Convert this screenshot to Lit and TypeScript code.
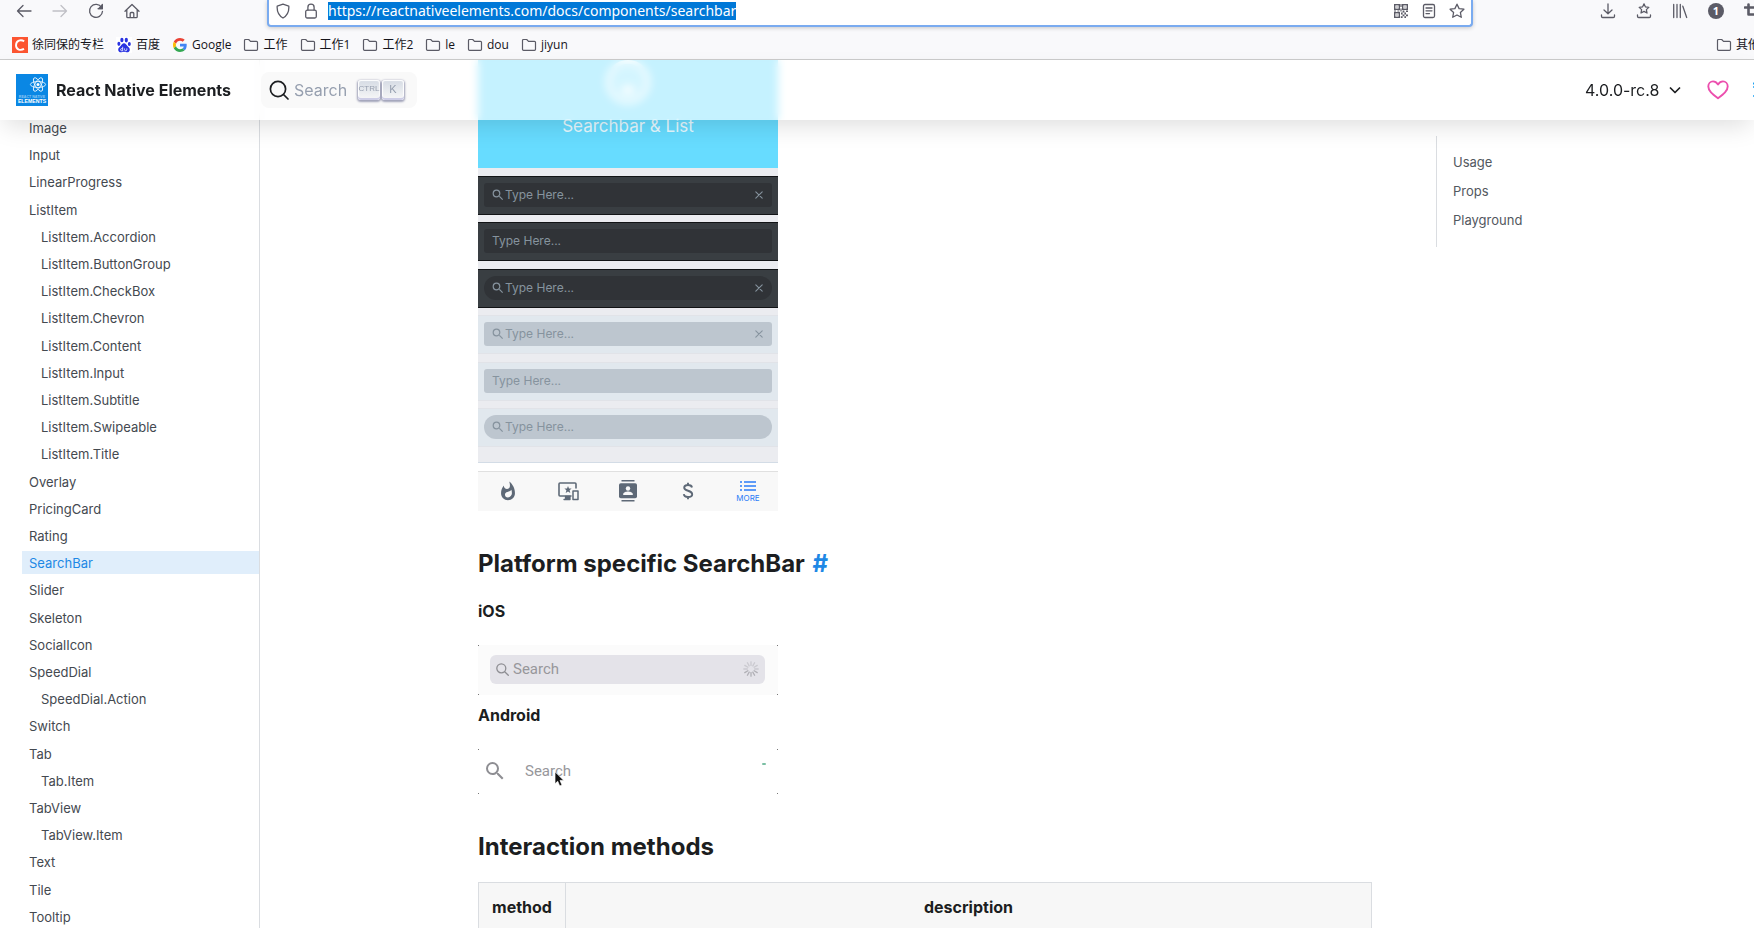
import { LitElement, html, css, svg, TemplateResult } from "lit";
import { customElement } from "lit/decorators.js";
import { classMap } from "lit/directives/class-map.js";

const icon = (w: number, h: number, body: TemplateResult | TemplateResult[], box = `0 0 ${w} ${h}`) =>
  html`<svg width=${w} height=${h} viewBox=${box} fill="none" stroke="currentColor" stroke-width="1.3"
    stroke-linecap="round" stroke-linejoin="round" aria-hidden="true">${body}</svg>`;

const folder = icon(16, 14, svg`<path d="M1.5 2.5a1 1 0 0 1 1-1h3.2l1.8 1.8h6a1 1 0 0 1 1 1v7a1 1 0 0 1-1 1h-11a1 1 0 0 1-1-1z" stroke-width="1.2"/>`);
const star = "M8 1.2l2.1 4.4 4.8.6-3.5 3.3.9 4.8L8 12l-4.3 2.3.9-4.8L1.1 6.2l4.8-.6z";
const magnifier = svg`<path stroke="none" fill="currentColor" d="M15.5 14h-.79l-.28-.27A6.47 6.47 0 0 0 16 9.5 6.5 6.5 0 1 0 9.5 16c1.61 0 3.09-.59 4.23-1.57l.27.28v.79l5 4.99L20.49 19l-4.99-5zm-6 0C7.01 14 5 11.99 5 9.5S7.01 5 9.5 5 14 7.01 14 9.5 11.99 14 9.5 14z"/>`;
const cross = icon(8, 8, svg`<path d="M.8.8l6.4 6.4M7.2.8L.8 7.2" stroke-width="1.1"/>`);

const qr = icon(14, 14, svg`<g stroke-width="1.4" stroke-linejoin="miter"><rect x=".7" y=".7" width="4.6" height="4.6"/><rect x="8.7" y=".7" width="4.6" height="4.6"/><rect x=".7" y="8.7" width="4.6" height="4.6"/></g>
  <g fill="currentColor" stroke="none"><path d="M2.4 2.4h1.2v1.2H2.4zM10.4 2.4h1.2v1.2h-1.2zM2.4 10.4h1.2v1.2H2.4zM0 6.4h2v1.2H0zM3.4 6.4h2v1.2h-2zM6.4 0h1.2v3H6.4zM6.4 4.4h1.2v3H6.4zM8.6 6.6h1.8v1.8H8.6zM12 6.6h2v1.4h-2zM7 8.6h1.6v1.8H7zM10.4 8.6H12v1.8h-1.6zM8.6 10.4h1.8v1.8H8.6zM12 10.4h2v1.8h-2zM6.8 12.2h1.8V14H6.8zM10.4 12.2H12V14h-1.6z"/></g>`);

const reactLogo = html`<svg class="logo" width="32" height="32" viewBox="0 0 32 32" aria-hidden="true">
  <rect width="32" height="32" fill="#0a87e4"/>
  <g fill="none" stroke="#fff" stroke-width=".8"><ellipse cx="22" cy="10.5" rx="7.6" ry="3"/><ellipse cx="22" cy="10.5" rx="7.6" ry="3" transform="rotate(60 22 10.5)"/><ellipse cx="22" cy="10.5" rx="7.6" ry="3" transform="rotate(120 22 10.5)"/></g>
  <circle cx="22" cy="10.5" r="1.5" fill="#fff"/>
  <text x="16" y="23.5" text-anchor="middle" font-family="Liberation Sans" font-size="3.6" fill="#8cc6f3">REACT NATIVE</text>
  <text x="16" y="28.5" text-anchor="middle" font-family="Liberation Sans" font-size="5.2" fill="#fff">ELEMENTS</text>
</svg>`;

const baidu = html`<svg width="16" height="16" viewBox="0 0 16 16" aria-hidden="true"><rect width="16" height="16" fill="#fff"/>
  <g fill="#2932e1"><ellipse cx="5.9" cy="3" rx="1.6" ry="2.3"/><ellipse cx="10.3" cy="3.1" rx="1.6" ry="2.3"/><ellipse cx="2.9" cy="6.8" rx="1.5" ry="2.1"/><ellipse cx="13.3" cy="7" rx="1.5" ry="2.1"/>
  <path d="M8 6.3c1.6 0 2.4 1.5 3.4 2.6 1.3 1.2 2.6 2.2 2.4 4-.2 1.7-1.6 2.5-3.1 2.3-1-.2-1.8-.4-2.7-.4s-1.7.3-2.7.4c-1.5.2-2.9-.6-3.1-2.3-.2-1.8 1.200-2.800 2.400-4C5.600 7.800 6.400 6.300 8 6.300z"/></g>
  <path d="M6.700 9.800v4M6.700 11.600h-1a1 1 0 0 0 0 2.200h1M8.600 11.400v1.500c0 1.200 2.200 1.200 2.200 0v-1.500" fill="none" stroke="#fff" stroke-width=".8"/></svg>`;

const google = html`<svg width="16" height="14" viewBox="-3 0 54 48" aria-hidden="true">
  <path fill="#ea4335" d="M24 9.500c3.540 0 6.710 1.220 9.210 3.600l6.850-6.850C35.900 2.380 30.470 0 24 0 14.620 0 6.510 5.380 2.560 13.220l7.980 6.190C12.430 13.720 17.740 9.500 24 9.500z"/>
  <path fill="#4285f4" d="M46.980 24.550c0-1.570-.15-3.090-.38-4.550H24v9.020h12.940c-.58 2.960-2.260 5.480-4.780 7.180l7.730 6c4.510-4.180 7.090-10.360 7.090-17.650z"/>
  <path fill="#fbbc05" d="M10.530 28.590A14.500 14.500 0 0 1 9.770 24c0-1.600.27-3.140.76-4.590l-7.980-6.190A23.900 23.900 0 0 0 0 24c0 3.880.92 7.540 2.560 10.780z"/>
  <path fill="#34a853" d="M24 48c6.480 0 11.930-2.130 15.890-5.810l-7.730-6c-2.150 1.450-4.920 2.300-8.160 2.300-6.260 0-11.570-4.220-13.470-9.910l-7.980 6.190C6.510 42.620 14.620 48 24 48z"/></svg>`;

const csdn = html`<svg width="16" height="16" viewBox="0 0 16 16" aria-hidden="true"><rect width="16" height="16" fill="#fc5531"/>
  <path d="M12.200 4.200C9 2.300 4 3 4 8.300c0 4.700 4.700 5.400 8 3.600" fill="none" stroke="#fff" stroke-width="1.900"/></svg>`;

const browserStyles = css`
  :host { display: block; color: #15141a; background: #f9f9fb; border-bottom: 1px solid #ccc; overflow: hidden; font-family: "Open Sans", "Noto Sans CJK SC", sans-serif; }
  svg { display: block; flex: none; }
  button { border: 0; padding: 0; background: none; color: inherit; font: inherit; }
  .toolbar { display: grid; grid-template-columns: 267px minmax(0, 1fr) 281px; height: 30px; align-items: start; color: #5b5b66; }
  .group { display: flex; padding-left: 6px; }
  .tool { width: 36px; height: 22px; flex: none; display: grid; place-items: center; }
  .tool.dim { color: #c0c0c6; }
  .extras { padding-left: 117px; overflow: hidden; }
  .badge { width: 16px; height: 16px; border-radius: 50%; background: #5b5b66; color: #fff; font-size: 11px; font-weight: 700; line-height: 16px; text-align: center; }
  .address { display: flex; align-items: center; height: 27px; box-sizing: border-box; padding-bottom: 3px; background: #fff; border: 2px solid #7aabf0; border-top: 0; border-radius: 0 0 4px 4px; box-shadow: 0 1px 4px rgba(0, 0, 0, .2); }
  .address .tool { width: 28px; }
  .url-wrap { flex: 1; display: flex; padding-left: 3px; min-width: 0; }
  .url { field-sizing: content; max-width: 100%; border: 0; padding: 0; margin: 0; height: 18px; font: 14px/18px "Noto Sans", sans-serif; color: #fff; background: #0078d7; outline: 0; }
  .bookmarks { display: flex; align-items: center; height: 29px; padding: 1px 0 0 12px; box-sizing: border-box; font-size: 12px; line-height: 16px; gap: 12px; }
  .bookmarks a { display: flex; align-items: center; gap: 4px; color: inherit; text-decoration: none; white-space: nowrap; flex: none; }
  .bookmarks svg { color: #5b5b66; }
  .bookmarks a.other { margin-left: auto; width: 38px; overflow: hidden; }
`;

@customElement("browser-chrome")
class BrowserChrome extends LitElement {
  static styles = browserStyles;
  render() {
    const marks: [TemplateResult, string][] = [
      [csdn, "徐同保的专栏"], [baidu, "百度"], [google, "Google"], [folder, "工作"], [folder, "工作1"],
      [folder, "工作2"], [folder, "le"], [folder, "dou"], [folder, "jiyun"],
    ];
    return html`
      <div class="toolbar">
        <div class="group">
          <button class="tool" aria-label="Back">${icon(16, 16, svg`<path d="M15 8H1.500M7 2.500L1.500 8 7 13.500"/>`)}</button>
          <button class="tool dim" aria-label="Forward">${icon(16, 16, svg`<path d="M1 8h13.500M9 2.500L14.500 8 9 13.500"/>`)}</button>
          <button class="tool" aria-label="Reload">${icon(16, 16, svg`<path d="M13.600 4.600A6.500 6.500 0 1 0 14.500 8.300M14.300 1.500v4.200h-4.200"/><path d="M14.300 2v3.700h-3.700z" fill="currentColor"/>`)}</button>
          <button class="tool" aria-label="Home">${icon(16, 16, svg`<path d="M1 8.300L8 1.500l7 6.800M2.800 7v6.700a1 1 0 0 0 1 1h8.400a1 1 0 0 0 1-1V7M6.200 14.500v-4a1 1 0 0 1 1-1h1.600a1 1 0 0 1 1 1v4"/>`)}</button>
        </div>
        <div class="address">
          <button class="tool" aria-label="Protection">${icon(14, 16, svg`<path d="M7 1.200l5.800 1.900c.4 5.300-1 9.300-5.800 11.900C2.200 12.400.8 8.400 1.200 3.100z"/>`)}</button>
          <button class="tool" aria-label="Site information">${icon(14, 16, svg`<rect x="1.700" y="7.200" width="10.600" height="7.800" rx="1.500"/><path d="M3.900 7V4.200a3.100 3.100 0 0 1 6.200 0V7"/>`)}</button>
          <div class="url-wrap"><input class="url" aria-label="Address" size="50" value="https://reactnativeelements.com/docs/components/searchbar" /></div>
          <button class="tool" aria-label="QR code">${qr}</button>
          <button class="tool" aria-label="Reader view">${icon(14, 16, svg`<rect x="1.500" y="1.500" width="11" height="13" rx="1.500"/><path d="M4 5h6M4 7.800h6M4 10.600h3.500"/>`)}</button>
          <button class="tool" aria-label="Bookmark">${icon(16, 16, svg`<path d=${star}/>`)}</button>
        </div>
        <div class="group extras">
          <button class="tool" aria-label="Downloads">${icon(16, 16, svg`<path d="M8 1v9.500M4 7l4 3.700L12 7M1.500 12v1.300a1.200 1.200 0 0 0 1.200 1.200h10.600a1.200 1.200 0 0 0 1.200-1.200V12"/>`)}</button>
          <button class="tool" aria-label="Bookmarks menu">${icon(16, 16, svg`<g transform="translate(2.400 0) scale(.7)"><path d=${star} stroke-width="1.800"/></g><path d="M1.500 12v1.300a1.200 1.200 0 0 0 1.200 1.200h10.600a1.200 1.200 0 0 0 1.200-1.200V12"/>`)}</button>
          <button class="tool" aria-label="Library">${icon(16, 16, svg`<path d="M1.700 1.500v13M5 1.500v13M8.300 1.500v13M10.800 3.200l3.900 11.300"/>`)}</button>
          <button class="tool" aria-label="Account"><span class="badge">1</span></button>
          <button class="tool" aria-label="Screenshot">${icon(16, 16, svg`<path d="M4.500 1.500v10h10M1 4.500h10.500v10" stroke-width="2.600"/>`)}</button>
        </div>
      </div>
      <nav class="bookmarks" aria-label="Bookmarks">
        ${marks.map(([i, t]) => html`<a href="#">${i}<span>${t}</span></a>`)}
        <a class="other" href="#">${folder}<span>其他书签</span></a>
      </nav>`;
  }
}

const phoneStyles = css`
  :host { display: block; width: 300px; color: #86939e; }
  svg { display: block; flex: none; }
  button { border: 0; padding: 0; background: none; color: inherit; font: inherit; }
  .hero { box-sizing: border-box; height: 108px; background: #67dcff; display: flex; flex-direction: column; align-items: center; justify-content: space-between; padding-bottom: 31px; color: rgba(255, 255, 255, .85); font-size: 17px; line-height: 22px; }
  .bars { box-sizing: border-box; height: 295px; padding: 8px 0 15px; background: #ebecf0; border-bottom: 1px solid #d3dce6; display: flex; flex-direction: column; justify-content: space-between; }
  .bar { box-sizing: border-box; height: 39px; padding: 6px; background: #393e42; border: solid #121416; border-width: 1px 0; }
  .field { height: 24px; box-sizing: border-box; padding: 0 9px 0 8px; border-radius: 3px; background: #303337; display: flex; align-items: center; gap: 1px; }
  .field.round { border-radius: 12px; }
  .bar.light { background: #e1e8ee; border-color: #e1e3e8; }
  .light .field { background: #bdc6cf; }
  input { flex: 1; min-width: 0; border: 0; padding: 0; background: none; outline: 0; font: 12px/20px Inter, sans-serif; color: #86939e; }
  input::placeholder { color: #86939e; opacity: 1; }
  .tabs { margin-top: 8px; box-sizing: border-box; height: 40px; border-top: 1px solid #e0e0e0; background: #f8f8f8; display: grid; grid-template-columns: repeat(5, 1fr); color: #5e6977; }
  .tab { display: flex; flex-direction: column; align-items: center; justify-content: center; gap: 2px; padding-bottom: 1px; }
  .tab.active { color: #2b7cf7; font-size: 8px; line-height: 9px; }
`;

@customElement("phone-preview")
class PhonePreview extends LitElement {
  static styles = phoneStyles;
  render() {
    const bars = [
      { glass: true, clear: true }, {}, { glass: true, clear: true, round: true },
      { light: true, glass: true, clear: true }, { light: true }, { light: true, glass: true, round: true },
    ] as { light?: boolean; glass?: boolean; clear?: boolean; round?: boolean }[];
    return html`
      <div class="hero">
        <svg width="46" height="46" viewBox="0 0 46 46" aria-hidden="true"><circle cx="23" cy="22" r="20" fill="#fff" fill-opacity=".25" stroke="#fff" stroke-opacity=".9" stroke-width="4"/><ellipse cx="23" cy="30" rx="7" ry="4" fill="#fff"/></svg>
        <span>Searchbar &amp; List</span>
      </div>
      <div class="bars">
        ${bars.map((b) => html`<div class=${classMap({ bar: true, light: !!b.light })}>
          <div class=${classMap({ field: true, round: !!b.round })}>
            ${b.glass ? icon(12, 12, magnifier, "2 2 20 20") : ""}
            <input aria-label="Search" placeholder="Type Here..." />
            ${b.clear ? html`<button aria-label="Clear">${cross}</button>` : ""}
          </div></div>`)}
      </div>
      <div class="tabs">
        <button class="tab" aria-label="Hot">${icon(18, 20, svg`<path stroke="none" fill="currentColor" fill-rule="evenodd" d="M13.500.67s.74 2.650.74 4.800c0 2.060-1.350 3.730-3.410 3.730-2.070 0-3.630-1.670-3.630-3.730l.03-.36C5.210 7.510 4 10.620 4 14c0 4.420 3.580 8 8 8s8-3.580 8-8C20 8.610 17.410 3.800 13.500.67zM11.710 19c-1.780 0-3.220-1.400-3.220-3.140 0-1.620 1.050-2.760 2.810-3.120 1.770-.36 3.600-1.210 4.620-2.580.39 1.290.59 2.650.59 4.040 0 2.650-2.150 4.800-4.800 4.800z"/>`, "2 0 20 23")}</button>
        <button class="tab" aria-label="Devices">${icon(22, 20, svg`<path d="M14 15H3a1 1 0 0 1-1-1V3a1 1 0 0 1 1-1h15a1 1 0 0 1 1 1v4" stroke-width="1.600"/><rect x="16" y="10" width="5" height="8.500" stroke-width="1.500"/><path d="M7 18.500h6v-3H8.500v3" fill="currentColor"/><path d="M11 5l1 2.500 2.600.1-2 1.700.7 2.600L11 10.400l-2.300 1.500.7-2.600-2-1.700 2.600-.1z" fill="currentColor" stroke="none"/>`)}</button>
        <button class="tab" aria-label="Contacts">${icon(18, 22, svg`<g stroke="none" fill="currentColor"><path d="M2.500 0h13v1.600h-13zM2.500 20h13v1.600h-13z"/><rect y="3.300" width="18" height="15" rx="1.800"/></g><circle cx="9" cy="8.500" r="2.200" fill="#f8f8f8" stroke="none"/><path d="M4.200 15v-1c0-1.700 3-2.600 4.800-2.600s4.800.9 4.800 2.600v1z" fill="#f8f8f8" stroke="none"/>`)}</button>
        <button class="tab" aria-label="Payments">${icon(12, 18, svg`<path d="M10 5.500C9.700 3.800 8.300 3 6 3S2.200 4.100 2.200 5.700C2.200 9.500 10.200 8 10.200 12.200c0 1.800-1.800 2.800-4.200 2.800s-4-1-4.200-2.800M6 .8V3M6 15v2.200" stroke-width="1.900" stroke-linecap="butt"/>`)}</button>
        <button class="tab active">${icon(16, 12, svg`<path d="M4 2h12M4 6h12M4 10h12M0 2h2M0 6h2M0 10h2" stroke-width="1.600" stroke-linecap="butt"/>`)}<span>MORE</span></button>
      </div>`;
  }
}

const rootStyles = css`
  :host { display: flex; flex-direction: column; height: 100vh; overflow: hidden; background: #fff; color: #1c1e21; font-family: Inter, sans-serif; }
  svg { display: block; flex: none; }
  button { border: 0; padding: 0; background: none; color: inherit; font: inherit; }
  a { color: inherit; text-decoration: none; }
  browser-chrome { flex: none; }
  .page { flex: 1; min-height: 0; display: grid; grid-template: minmax(0, 1fr) / minmax(0, 1fr); }
  .header { grid-area: 1 / 1; align-self: start; z-index: 2; box-sizing: border-box; height: 60px; display: flex; align-items: center; background: rgba(255, 255, 255, .62); backdrop-filter: blur(4px); box-shadow: 0 10px 24px -4px rgba(0, 0, 0, .13); padding-left: 16px; }
  .brand { display: flex; align-items: center; gap: 8px; width: 245px; font-size: 16px; font-weight: 700; white-space: nowrap; }
  .search { display: flex; align-items: center; height: 36px; width: 156px; box-sizing: border-box; padding: 0 13px 0 8px; border-radius: 8px; background: #f9f9f9; color: #1c1e21; }
  .search span { color: #969faf; font-size: 16px; margin-left: 5px; flex: 1; text-align: left; }
  kbd { box-sizing: border-box; width: 22px; height: 20px; margin-left: 2px; padding-bottom: 2px; border-radius: 3px; display: grid; place-items: center; font: 11px/16px "Liberation Sans", sans-serif; color: #969faf; background: linear-gradient(#d5dbe4, #f8f8f8); box-shadow: inset 0 -2px 0 #cdcde6, inset 0 0 1px 1px #fff, 0 1px 2px 1px rgba(30, 35, 90, .4); }
  kbd.ctrl { font-size: 8px; }
  .nav { margin-left: auto; width: 169px; display: flex; align-items: center; overflow: hidden; white-space: nowrap; }
  .nav a { flex: none; }
  .version { display: flex; align-items: center; justify-content: space-between; width: 96px; font-size: 16px; }
  .heart { color: #ec4fae; margin-left: 26px; }
  .social { color: #1da1f2; margin-left: 24px; }
  .docs { grid-area: 1 / 1; min-height: 0; display: grid; grid-template: minmax(0, 1fr) / 260px minmax(0, 1fr) 318px; }
  .side { border-right: 1px solid #dadde1; padding: 56px 0 0 22px; overflow: hidden; }
  .side ul { box-sizing: border-box; height: 100%; margin: 0; padding: 0; list-style: none; display: flex; flex-direction: column; justify-content: space-between; }
  .side a { display: block; height: 23px; line-height: 24px; padding-left: 7px; font-size: 13px; color: #444950; }
  .side .sub { padding-left: 19px; }
  .side .on { background: #e0eefb; color: #1e88e5; }
  .main { padding: 0 64px 0 218px; min-width: 0; overflow: hidden; }
  h2 { margin: 38px 0 0; font-size: 24px; line-height: 30px; font-weight: 700; }
  h2 a { color: #1e88e5; margin-left: 2px; }
  h3 { margin: 22px 0 24px; font-size: 16px; line-height: 20px; font-weight: 700; }
  h3.tight { margin-top: 10px; }
  .shot { width: 300px; box-sizing: border-box; display: flex; align-items: center; position: relative; color: #8e8e93;
    --dot: linear-gradient(#777, #777);
    background: var(--dot) 0 0 / 1px 1px no-repeat, var(--dot) 100% 0 / 1px 1px no-repeat, var(--dot) 0 100% / 1px 1px no-repeat, var(--dot) 100% 100% / 1px 1px no-repeat, var(--fill); }
  .shot input { flex: 1; min-width: 0; border: 0; padding: 0; background: none; outline: 0; font: 15px/20px Roboto, sans-serif; }
  .shot input::placeholder { color: #97979b; opacity: 1; }
  .ios { --fill: #fbfbfb; height: 50px; padding: 0 13px 0 12px; }
  .ios .pill { flex: 1; height: 29px; border-radius: 6px; background: #e4e3e9; display: flex; align-items: center; gap: 4px; padding: 0 6px; margin-bottom: 2px; }
  .android { --fill: #fff; height: 45px; padding: 0 12px 2px 7px; gap: 20px; }
  .android .mark { width: 4px; height: 2px; border-radius: 1px; background: #7bbfa4; align-self: flex-start; margin-top: 14px; }
  .pointer { position: absolute; left: 76px; top: 22px; }
  table { margin-top: 20px; width: 100%; border-collapse: collapse; font-size: 16px; line-height: 24px; }
  th { border: 1px solid #dadde1; background: #f7f7f7; font-weight: 700; padding: 12px 12px 40px; }
  th:first-child { width: 62px; }
  .toc { align-self: start; margin-top: 76px; height: 111px; box-sizing: border-box; padding: 12px 16px; border-left: 1px solid #dadde1; display: flex; flex-direction: column; font-size: 13px; line-height: 29px; color: #525860; }
`;

@customElement("app-root")
class AppRoot extends LitElement {
  static styles = rootStyles;
  render() {
    const items = ["Image", "Input", "LinearProgress", "ListItem", "ListItem.Accordion", "ListItem.ButtonGroup", "ListItem.CheckBox", "ListItem.Chevron", "ListItem.Content", "ListItem.Input", "ListItem.Subtitle", "ListItem.Swipeable", "ListItem.Title", "Overlay", "PricingCard", "Rating", "SearchBar", "Slider", "Skeleton", "SocialIcon", "SpeedDial", "SpeedDial.Action", "Switch", "Tab", "Tab.Item", "TabView", "TabView.Item", "Text", "Tile", "Tooltip"];
    return html`
      <browser-chrome></browser-chrome>
      <div class="page">
        <header class="header">
          <a class="brand" href="#">${reactLogo}<span>React Native Elements</span></a>
          <button class="search">${icon(20, 20, svg`<circle cx="9" cy="9" r="7.600" stroke-width="1.700"/><path d="M14.500 14.500L19 19" stroke-width="1.700"/>`)}<span>Search</span><kbd class="ctrl">CTRL</kbd><kbd>K</kbd></button>
          <nav class="nav" aria-label="Site">
            <a class="version" href="#">4.0.0-rc.8 ${icon(12, 8, svg`<path d="M1 1.500l5 5 5-5" stroke-width="1.700" stroke-linecap="butt"/>`)}</a>
            <a class="heart" href="#" aria-label="Sponsor">${icon(22, 20, svg`<path d="M11 18.300C5.500 14 1.300 10.800 1.300 6.500 1.300 3.500 3.500 1.400 6 1.400c2 0 3.600.9 5 3 1.400-2.100 3-3 5-3 2.500 0 4.700 2.100 4.700 5.100 0 4.300-4.200 7.500-9.700 11.800z" stroke-width="1.900"/>`)}</a>
            <a class="social" href="#" aria-label="Twitter">${icon(16, 16, svg`<path d="M0 1l3 3M0 5h3M0 14h6" stroke-width="1.500"/>`)}</a>
          </nav>
        </header>
        <div class="docs">
          <nav class="side" aria-label="Components"><ul>
            ${items.map((t) => html`<li><a href="#" class=${classMap({ sub: t.includes("."), on: t === "SearchBar" })}>${t}</a></li>`)}
          </ul></nav>
          <main class="main">
            <phone-preview></phone-preview>
            <h2>Platform specific SearchBar <a href="#">#</a></h2>
            <h3>iOS</h3>
            <div class="shot ios"><div class="pill">
              ${icon(13, 13, svg`<circle cx="5.300" cy="5.300" r="4.500"/><path d="M8.700 8.700l3.600 3.600"/>`)}
              <input aria-label="iOS search" placeholder="Search" />
              ${icon(16, 16, Array.from({ length: 12 }, (_, i) => svg`<path d="M8 .8v3.600" stroke="#9a9aa0" stroke-opacity=${i > 3 && i < 9 ? 0.7 : 0.35} transform="rotate(${i * 30} 8 8)"/>`))}
            </div></div>
            <h3 class="tight">Android</h3>
            <div class="shot android">
              ${icon(20, 20, magnifier, "2 2 20 20")}
              <input aria-label="Android search" placeholder="Search" />
              <span class="mark"></span>
              <svg class="pointer" width="12" height="18" viewBox="0 0 12 18" aria-hidden="true"><path d="M1 .8v12l2.700-2.600 2 4.800 2.300-1-2-4.600h3.800z" fill="#111" stroke="#fff" stroke-width=".7"/></svg>
            </div>
            <h2>Interaction methods</h2>
            <table><thead><tr><th scope="col">method</th><th scope="col">description</th></tr></thead></table>
          </main>
          <nav class="toc" aria-label="On this page"><a href="#">Usage</a><a href="#">Props</a><a href="#">Playground</a></nav>
        </div>
      </div>`;
  }
}
